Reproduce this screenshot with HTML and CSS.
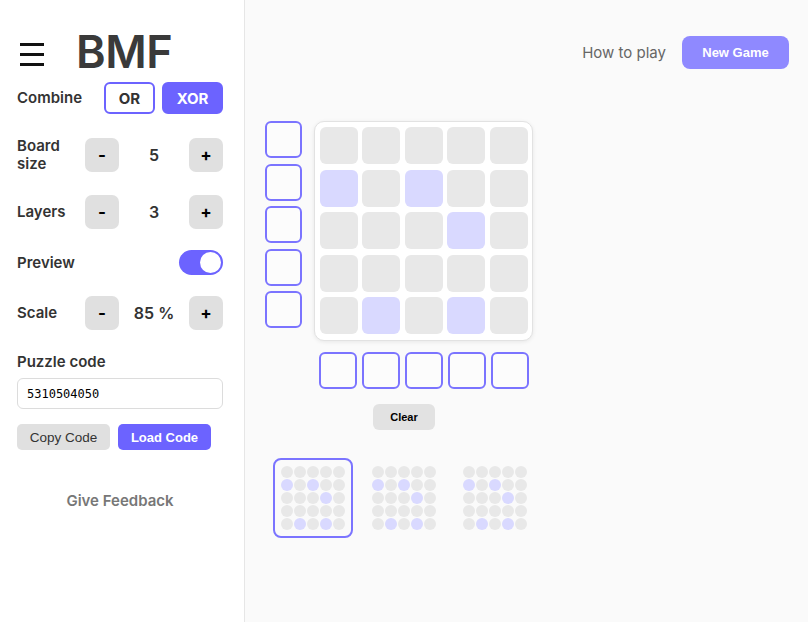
FILE: index.html
```html
<!DOCTYPE html>
<html lang="en">
<head>
  <meta charset="UTF-8" />
  <meta name="viewport" content="width=device-width, initial-scale=1.0"/>
  <title>BMF</title>
  <link rel="stylesheet" href="styles.css">
</head>
<body>
  <aside class="sidebar">
    <div class="brand">
      <svg class="menu-icon" width="24" height="24" viewBox="0 0 24 24">
        <rect x="0" y="0" width="24" height="3" fill="#111"/>
        <rect x="0" y="10" width="24" height="3" fill="#111"/>
        <rect x="0" y="20" width="24" height="3" fill="#111"/>
      </svg>
      <h1>BMF</h1>
    </div>

    <div class="setting combine">
      <span class="label">Combine</span>
      <div class="choice">
        <button class="opt">OR</button>
        <button class="opt selected">XOR</button>
      </div>
    </div>

    <div class="setting">
      <span class="label">Board<br>size</span>
      <div class="stepper">
        <button class="step">-</button>
        <span class="value">5</span>
        <button class="step">+</button>
      </div>
    </div>

    <div class="setting">
      <span class="label">Layers</span>
      <div class="stepper">
        <button class="step">-</button>
        <span class="value">3</span>
        <button class="step">+</button>
      </div>
    </div>

    <div class="setting preview">
      <span class="label">Preview</span>
      <div class="toggle on"><span class="knob"></span></div>
    </div>

    <div class="setting">
      <span class="label">Scale</span>
      <div class="stepper">
        <button class="step">-</button>
        <span class="value">85 %</span>
        <button class="step">+</button>
      </div>
    </div>

    <div class="code-box">
      <span class="label">Puzzle code</span>
      <input type="text" class="code-input" value="5310504050" />
      <div class="code-actions">
        <button class="btn gray">Copy Code</button>
        <button class="btn purple">Load Code</button>
      </div>
    </div>

    <p class="feedback">Give Feedback</p>
  </aside>

  <main class="main">
    <div class="topbar">
      <span class="how">How to play</span>
      <button class="new-game">New Game</button>
    </div>

    <div class="game">
      <div class="play">
        <div class="row-hints" id="rowHints"></div>
        <div class="board" id="board"></div>
        <div></div>
        <div class="col-hints" id="colHints"></div>
      </div>
      <button class="clear">Clear</button>
      <div class="layers" id="layers"></div>
    </div>
  </main>

  <script>
    const pattern = [
      [0,0,0,0,0],
      [1,0,1,0,0],
      [0,0,0,1,0],
      [0,0,0,0,0],
      [0,1,0,1,0]
    ];

    const board = document.getElementById('board');
    pattern.forEach(row => row.forEach(v => {
      const c = document.createElement('div');
      c.className = v ? 'cell on' : 'cell';
      board.appendChild(c);
    }));

    ['rowHints', 'colHints'].forEach(id => {
      const el = document.getElementById(id);
      for (let i = 0; i < 5; i++) {
        const h = document.createElement('div');
        h.className = 'hint';
        el.appendChild(h);
      }
    });

    const layers = document.getElementById('layers');
    for (let l = 0; l < 3; l++) {
      const mini = document.createElement('div');
      mini.className = l === 0 ? 'mini active' : 'mini';
      pattern.forEach(row => row.forEach(v => {
        const d = document.createElement('span');
        d.className = v ? 'dot on' : 'dot';
        mini.appendChild(d);
      }));
      layers.appendChild(mini);
    }
  </script>
</body>
</html>
```

FILE: styles.css
```css
body {
  margin: 0;
  font-family: 'Inter', 'Liberation Sans', sans-serif;
  display: flex;
  height: 100vh;
  background: #fafafa;
  color: #333;
}

button {
  font-family: inherit;
  border: none;
  cursor: pointer;
}

.sidebar {
  width: 245px;
  box-sizing: border-box;
  padding: 28px 21px 0 17px;
  background: white;
  border-right: 1px solid #e6e6e6;
  display: flex;
  flex-direction: column;
}

.brand {
  display: flex;
  align-items: center;
  height: 48px;
  margin-bottom: 6px;
}

.menu-icon {
  margin-left: 3px;
  margin-top: 5px;
}

.brand h1 {
  margin: 0 0 0 32px;
  font-size: 45px;
  line-height: 48px;
  font-weight: 600;
  color: #3a3a3a;
  letter-spacing: -0.5px;
}

.setting {
  display: flex;
  align-items: center;
  justify-content: space-between;
  height: 34px;
  margin-bottom: 23px;
}

.setting.combine {
  height: 32px;
  margin-bottom: 24px;
}

.setting.preview {
  height: 25px;
  margin-bottom: 21px;
  margin-top: -2px;
}

.label {
  font-size: 15px;
  font-weight: 600;
  line-height: 18px;
  color: #333;
}

.choice {
  display: flex;
  gap: 7px;
}

.opt {
  height: 32px;
  border-radius: 6px;
  font-size: 15px;
  font-weight: 700;
  box-sizing: border-box;
  border: 2px solid #6c63ff;
  background: white;
  color: #333;
  width: 51px;
}

.opt.selected {
  width: 61px;
  background: #6c63ff;
  color: white;
}

.stepper {
  display: flex;
  align-items: center;
}

.step {
  width: 34px;
  height: 34px;
  border-radius: 7px;
  background: #e0e0e0;
  color: #000;
  font-size: 17px;
  font-weight: 700;
  padding: 0;
}

.value {
  width: 70px;
  text-align: center;
  font-size: 16px;
  font-weight: 600;
  color: #333;
}

.toggle {
  width: 44px;
  height: 25px;
  border-radius: 13px;
  background: #6c63ff;
  position: relative;
}

.toggle .knob {
  position: absolute;
  right: 2px;
  top: 2px;
  width: 21px;
  height: 21px;
  border-radius: 50%;
  background: white;
}

.code-box {
  display: flex;
  flex-direction: column;
}

.code-input {
  margin-top: 7px;
  height: 31px;
  box-sizing: border-box;
  border: 1px solid #dcdcdc;
  border-radius: 6px;
  padding: 0 9px;
  font-family: 'DejaVu Sans Mono', 'Liberation Mono', monospace;
  font-size: 12px;
  color: #000;
}

.code-actions {
  display: flex;
  gap: 8px;
  margin-top: 15px;
}

.btn {
  width: 93px;
  height: 26px;
  border-radius: 5px;
  font-family: 'Liberation Sans', Arial, sans-serif;
  font-size: 13.5px;
  padding: 0;
}

.btn.gray {
  background: #e0e0e0;
  color: #333;
}

.btn.purple {
  background: #6c63ff;
  color: white;
  font-size: 13px;
  font-weight: 700;
}

.feedback {
  margin: 41px 0 0;
  text-align: center;
  font-size: 15px;
  font-weight: 600;
  color: #777;
}

.main {
  flex: 1;
  display: flex;
  flex-direction: column;
}

.topbar {
  display: flex;
  justify-content: flex-end;
  align-items: center;
  gap: 16px;
  padding: 36px 19px 0 0;
}

.how {
  font-size: 15px;
  color: #666;
}

.new-game {
  width: 107px;
  height: 33px;
  border-radius: 8px;
  background: #8f89ff;
  color: white;
  font-family: 'Liberation Sans', Arial, sans-serif;
  font-size: 13px;
  font-weight: 700;
}

.game {
  margin-top: 52px;
  padding-left: 20px;
  display: flex;
  flex-direction: column;
  align-items: flex-start;
}

.play {
  display: grid;
  grid-template-columns: 37px auto;
  column-gap: 12px;
  row-gap: 11px;
}

.row-hints,
.col-hints {
  display: flex;
  gap: 5.5px;
}

.row-hints {
  flex-direction: column;
}

.col-hints {
  padding-left: 5px;
}

.hint {
  width: 37px;
  height: 37px;
  box-sizing: border-box;
  border: 2px solid #7b74ff;
  border-radius: 6px;
  background: #fcfcfc;
}

.col-hints .hint {
  width: 37.5px;
}

.board {
  display: grid;
  grid-template-columns: repeat(5, 38px);
  grid-auto-rows: 37px;
  column-gap: 4.5px;
  row-gap: 5.5px;
  padding: 5px 4.5px 6px;
  background: white;
  border: 1px solid #e2e2e2;
  border-radius: 10px;
  box-shadow: 0 1px 4px rgba(0, 0, 0, 0.08);
}

.cell {
  border-radius: 6px;
  background: #e8e8e8;
}

.cell.on {
  background: #d9d9ff;
}

.clear {
  margin: 15px 0 0 108px;
  width: 62px;
  height: 26px;
  border-radius: 6px;
  background: #e2e2e2;
  color: #000;
  font-family: 'Liberation Sans', Arial, sans-serif;
  font-size: 11px;
  font-weight: 700;
}

.layers {
  display: flex;
  gap: 11px;
  margin: 28px 0 0 8px;
}

.mini {
  width: 80px;
  height: 80px;
  box-sizing: border-box;
  border: 2px solid transparent;
  border-radius: 8px;
  padding: 6px;
  display: grid;
  grid-template-columns: repeat(5, 12px);
  grid-auto-rows: 12px;
  gap: 1px;
}

.mini.active {
  border-color: #7b74ff;
}

.dot {
  border-radius: 50%;
  background: #e8e8e8;
}

.dot.on {
  background: #d9d9ff;
}
```
